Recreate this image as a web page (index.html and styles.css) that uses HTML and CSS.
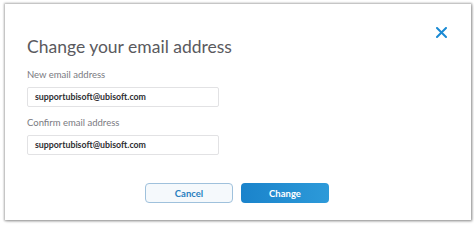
FILE: index.html
```html
<!DOCTYPE html>
<html>
<head>
<meta charset="utf-8">
<link rel="stylesheet" href="styles.css">
</head>
<body>
<div class="dialog">
  <button class="close" aria-label="Close">
    <svg width="11" height="11" viewBox="0 0 11 11"><path d="M1 1L10 10M10 1L1 10" stroke="#1a8ad4" stroke-width="2" stroke-linecap="round"/></svg>
  </button>
  <h1 class="title">Change your email address</h1>
  <div class="field">
    <label class="label">New email address</label>
    <div class="input">supportubisoft@ubisoft.com</div>
  </div>
  <div class="field">
    <label class="label">Confirm email address</label>
    <div class="input">supportubisoft@ubisoft.com</div>
  </div>
  <div class="actions">
    <button class="btn btn-cancel">Cancel</button>
    <button class="btn btn-change">Change</button>
  </div>
</div>
</body>
</html>
```
FILE: styles.css
```css
html, body { margin: 0; padding: 0; background: #fff; }
body { width: 474px; height: 225px; overflow: hidden; font-family: "Lato", "Noto Sans", sans-serif; }
.dialog {
  position: relative;
  box-sizing: border-box;
  margin: 4px 0 0 5px;
  width: 466px;
  height: 216px;
  background: #fff;
  box-shadow: 0 0 2px 1px rgba(0,0,0,0.28), 1px 1px 3px rgba(0,0,0,0.25);
  padding: 33px 0 0 22px;
}
.close {
  position: absolute;
  top: 23px; right: 24px;
  border: 0; background: none; padding: 0; width: 11px; height: 11px; display: block;
}
.close svg { display: block; }
.title {
  margin: 0 0 12px;
  font-size: 17.5px;
  font-weight: 400;
  color: #5a5a5e;
  line-height: 20px;
}
.field { display: flex; flex-direction: column; margin-bottom: 10px; }
.label { font-size: 9.5px; color: #7a7a7f; line-height: 12px; margin-bottom: 6px; }
.input {
  box-sizing: border-box;
  width: 192px; height: 20px;
  border: 1px solid #e2e2e4;
  border-radius: 2px;
  padding: 0 7px;
  font-size: 8.8px; font-weight: 700; color: #2e2e32;
  line-height: 18px;
}
.actions { display: flex; gap: 8px; margin: 28px 0 0 118px; }
.btn {
  box-sizing: border-box;
  width: 88px; height: 20px;
  border-radius: 4px;
  font-family: inherit;
  font-size: 9.5px; font-weight: 700;
  padding: 0;
}
.btn-cancel { background: #f5f9fc; border: 1px solid #9fc1dc; color: #2a7fbf; }
.btn-change { background: linear-gradient(90deg, #1a83cb, #2d9ad9); border: 0; color: #fff; }
```
